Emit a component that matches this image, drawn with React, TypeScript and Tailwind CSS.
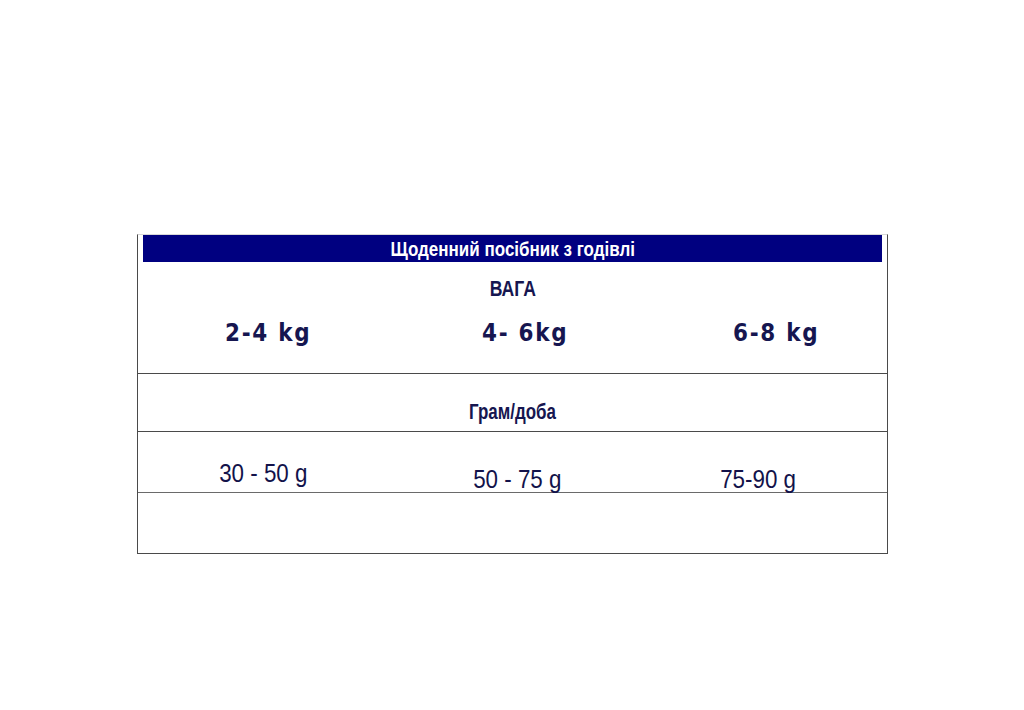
import React from "react";

const arial = { fontFamily: '"Liberation Sans", Arial, sans-serif' };
const dejavu = { fontFamily: '"DejaVu Sans", Verdana, sans-serif' };

export default function App() {
  return (
    <div className="w-[1024px] h-[710px] bg-white relative">
      <div className="pt-[234px] pl-[137px]">
        <div className="w-[751px] border-x border-b border-[#4a4a4a] border-t border-t-[#d8d8d8]">
          <div className="mx-[5px] h-[27px] bg-[#000080] flex items-center justify-center">
            <span className="inline-block scale-x-[0.85] text-white font-bold text-[20px] leading-none whitespace-nowrap" style={arial}>
              Щоденний посібник з годівлі
            </span>
          </div>
          <div className="h-[111px] flex flex-col items-center text-[#161650]">
            <div className="mt-[16px] inline-block scale-x-[0.8] font-bold text-[22px] leading-none" style={arial}>ВАГА</div>
            <div className="w-full flex mt-[20px] font-bold text-[25px] leading-none tracking-[2px]" style={dejavu}>
              <div className="w-[250px] text-center pl-[10px]"><span className="inline-block scale-x-[0.86] whitespace-pre">2-4 kg</span></div>
              <div className="w-[250px] text-center pl-[26px]"><span className="inline-block scale-x-[0.86] whitespace-pre">4- 6kg</span></div>
              <div className="w-[250px] text-center pl-[28px]"><span className="inline-block scale-x-[0.86] whitespace-pre">6-8 kg</span></div>
            </div>
          </div>
          <div className="h-[58px] border-t border-[#4a4a4a] flex items-center justify-center text-[#161650]">
            <span className="inline-block scale-x-[0.77] font-bold text-[22px] leading-none mt-[18px]" style={arial}>Грам/доба</span>
          </div>
          <div className="h-[61px] border-t border-[#4a4a4a] flex text-[#12124a] text-[26px] leading-none" style={arial}>
            <div className="w-[250px] text-center pt-[28px]"><span className="inline-block scale-x-[0.86] whitespace-nowrap">30 - 50 g</span></div>
            <div className="w-[250px] text-center pt-[34px] pl-[10px]"><span className="inline-block scale-x-[0.86] whitespace-nowrap">50 - 75 g</span></div>
            <div className="w-[250px] text-center pt-[34px] pr-[8px]"><span className="inline-block scale-x-[0.86] whitespace-nowrap">75-90 g</span></div>
          </div>
          <div className="h-[61px] border-t border-[#6a6a6a]"></div>
        </div>
      </div>
    </div>
  );
}
